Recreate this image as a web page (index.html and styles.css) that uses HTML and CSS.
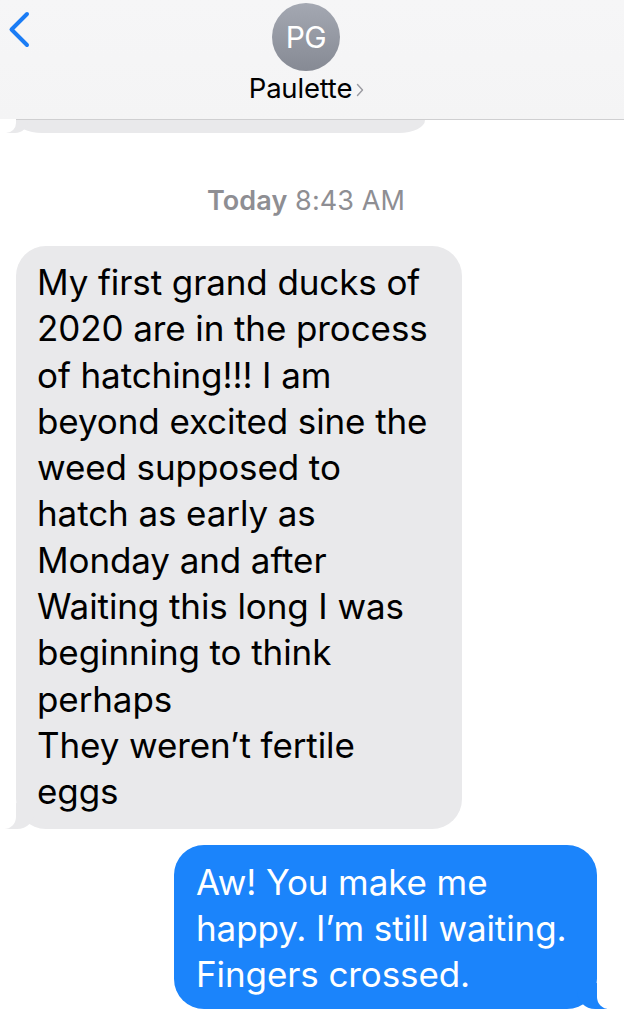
FILE: index.html
```html
<!DOCTYPE html>
<html>
<head>
<meta charset="utf-8">
<link rel="stylesheet" href="styles.css">
</head>
<body>
<div class="screen">
  <header class="nav">
    <div class="nav-left">
      <svg class="back" width="40" height="60" viewBox="0 0 40 60"><path d="M27 14 L11.5 29.5 L27 45" fill="none" stroke="#1a7cf5" stroke-width="4" stroke-linecap="round" stroke-linejoin="round"/></svg>
    </div>
    <div class="nav-center">
      <div class="avatar">PG</div>
      <div class="name">Paulette<svg class="name-chev" width="10" height="16" viewBox="0 0 10 16"><path d="M2.5 2.5 L7.5 8 L2.5 13.5" fill="none" stroke="#9a9aa0" stroke-width="1.4" stroke-linecap="round" stroke-linejoin="round"/></svg></div>
    </div>
    <div class="nav-right"></div>
  </header>
  <main class="thread">
    <div class="peek"></div>
    <div class="stamp"><span class="stamp-day">Today</span> 8:43 AM</div>
    <div class="row row-in">
      <div class="bubble in">My first grand ducks of<br>2020 are in the process<br>of hatching!!! I am<br>beyond excited sine the<br>weed supposed to<br>hatch as early as<br>Monday and after<br>Waiting this long I was<br>beginning to think<br>perhaps<br>They weren’t fertile<br>eggs</div>
    </div>
    <div class="row row-out">
      <div class="bubble out">Aw! You make me<br>happy. I’m still waiting.<br>Fingers crossed.</div>
    </div>
  </main>
</div>
</body>
</html>
```

FILE: styles.css
```css
html, body {
  margin: 0;
  padding: 0;
  background: #ffffff;
}
body {
  font-family: Inter, "Liberation Sans", Arial, sans-serif;
  width: 624px;
  height: 1023px;
  overflow: hidden;
}
.screen {
  width: 624px;
}
.nav {
  height: 119px;
  border-bottom: 1px solid #cfcfd1;
  background: linear-gradient(#f6f6f7, #f4f4f5);
  display: grid;
  grid-template-columns: 1fr auto 1fr;
}
.nav-left {
  align-self: start;
}
.back {
  display: block;
}
.nav-center {
  display: flex;
  flex-direction: column;
  align-items: center;
  padding-top: 3px;
  margin-right: 12px;
}
.avatar {
  width: 68px;
  height: 68px;
  border-radius: 50%;
  background: linear-gradient(#a4a8b2, #868a94);
  color: #ffffff;
  font-size: 30px;
  font-weight: 400;
  display: flex;
  align-items: center;
  justify-content: center;
  letter-spacing: -0.5px;
}
.name {
  margin-top: 0px;
  font-size: 27.5px;
  line-height: 34px;
  color: #000000;
  display: flex;
  align-items: center;
  gap: 3px;
  letter-spacing: -0.2px;
  margin-left: 2px;
}
.name-chev {
  margin-top: 3px;
}
.thread {
  display: flex;
  flex-direction: column;
}
.peek {
  position: relative;
  margin-left: 16px;
  width: 409px;
  height: 13px;
  background: #e9e9eb;
  border-radius: 0 0 26px 26px / 0 0 13px 13px;
}
.peek::before {
  content: "";
  position: absolute;
  bottom: 0;
  left: -10px;
  width: 22px;
  height: 13px;
  background: #e9e9eb;
  border-bottom-right-radius: 14px;
}
.peek::after {
  content: "";
  position: absolute;
  bottom: 0;
  left: -16px;
  width: 16px;
  height: 14px;
  background: #ffffff;
  border-bottom-right-radius: 10px;
}
.stamp {
  margin-top: 53px;
  text-align: center;
  font-size: 27px;
  line-height: 30px;
  color: #8e8e93;
  letter-spacing: 0.1px;
  padding-right: 12px;
}
.stamp-day {
  font-weight: 600;
}
.row {
  display: flex;
}
.row-in {
  margin-top: 30px;
  padding-left: 16px;
}
.row-out {
  margin-top: 16px;
  justify-content: flex-end;
  padding-right: 27px;
}
.bubble {
  position: relative;
  font-size: 35px;
  line-height: 46.3px;
  letter-spacing: -0.1px;
  white-space: nowrap;
  border-radius: 30px;
}
.bubble.in {
  width: 446px;
  box-sizing: border-box;
  padding: 13px 20px 14px 21px;
  background: #e9e9eb;
  color: #000000;
}
.bubble.out {
  width: 423px;
  box-sizing: border-box;
  padding: 14px 20px 12px 22px;
  background: #1b84fb;
  color: #ffffff;
}
.bubble.in::before {
  content: "";
  position: absolute;
  bottom: 0;
  left: -11px;
  width: 30px;
  height: 26px;
  background: #e9e9eb;
  border-bottom-right-radius: 18px;
}
.bubble.in::after {
  content: "";
  position: absolute;
  bottom: 0;
  left: -20px;
  width: 20px;
  height: 27px;
  background: #ffffff;
  border-bottom-right-radius: 12px;
}
.bubble.out::before {
  content: "";
  position: absolute;
  bottom: 0;
  right: -10px;
  width: 30px;
  height: 26px;
  background: #1b84fb;
  border-bottom-left-radius: 18px;
}
.bubble.out::after {
  content: "";
  position: absolute;
  bottom: 0;
  right: -20px;
  width: 20px;
  height: 27px;
  background: #ffffff;
  border-bottom-left-radius: 12px;
}
```
